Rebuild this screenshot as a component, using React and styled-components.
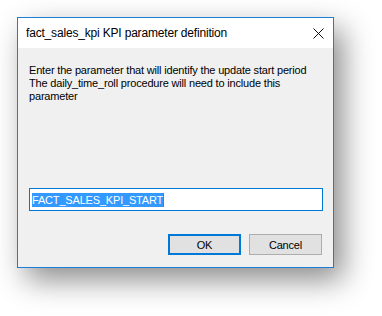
import styled, { createGlobalStyle } from "styled-components";

const GlobalStyle = createGlobalStyle`
  html, body {
    margin: 0;
    padding: 0;
    background: #ffffff;
  }
`;

export default function App() {
  return (
    <>
      <GlobalStyle />
      <Page>
        <Dialog>
          <TitleBar>
            <Title>fact_sales_kpi KPI parameter definition</Title>
            <CloseButton aria-label="Close">
              <svg width="11" height="11" viewBox="0 0 11 11">
                <path d="M0.5 0.5 L10.5 10.5 M10.5 0.5 L0.5 10.5" stroke="#111" strokeWidth="1" />
              </svg>
            </CloseButton>
          </TitleBar>
          <Body>
            <Message>
              Enter the parameter that will identify the update start period
              <br />
              The daily_time_roll procedure will need to include this
              <br />
              parameter
            </Message>
            <Field>
              <Selected>FACT_SALES_KPI_START</Selected>
            </Field>
            <Buttons>
              <Button $primary>OK</Button>
              <Button>Cancel</Button>
            </Buttons>
          </Body>
        </Dialog>
      </Page>
    </>
  );
}

const Page = styled.div`
  width: 382px;
  height: 316px;
  padding: 17px 0 0 17px;
  box-sizing: border-box;
  background: #ffffff;
  overflow: hidden;
`;

const Dialog = styled.div`
  width: 317px;
  height: 251px;
  box-sizing: border-box;
  border: 1px solid #1a7fd4;
  background: #f0f0f0;
  display: flex;
  flex-direction: column;
  box-shadow: 9px 12px 28px rgba(0, 0, 0, 0.45);
`;

const TitleBar = styled.div`
  height: 30px;
  background: #ffffff;
  display: flex;
  align-items: center;
  justify-content: space-between;
  padding: 0 9px 0 8px;
`;

const Title = styled.span`
  font-family: "Liberation Sans", Arial, sans-serif;
  font-size: 12px;
  letter-spacing: -0.18px;
  color: #000;
`;

const CloseButton = styled.div`
  display: flex;
  width: 11px;
  height: 11px;
`;

const Body = styled.div`
  flex: 1;
  display: flex;
  flex-direction: column;
  padding: 16px 10px 0 11px;
  font-family: "Liberation Sans", Arial, sans-serif;
  font-size: 11px;
  letter-spacing: -0.18px;
  color: #000;
`;

const Message = styled.div`
  line-height: 13px;
  height: 124px;
`;

const Field = styled.div`
  height: 23px;
  box-sizing: border-box;
  border: 1px solid #0078d7;
  background: #ffffff;
  display: flex;
  align-items: center;
  padding-left: 2px;
`;

const Selected = styled.span`
  background: #3399ff;
  color: #ffffff;
  line-height: 14px;
  border-right: 1px solid #c86400;
`;

const Buttons = styled.div`
  display: flex;
  justify-content: flex-end;
  gap: 8px;
  margin-top: 23px;
  padding-right: 1px;
`;

const Button = styled.div`
  width: 73px;
  height: 21px;
  box-sizing: border-box;
  background: #e1e1e1;
  border: ${({ $primary }) => ($primary ? "2px solid #0078d7" : "1px solid #adadad")};
  display: flex;
  align-items: center;
  justify-content: center;
`;
